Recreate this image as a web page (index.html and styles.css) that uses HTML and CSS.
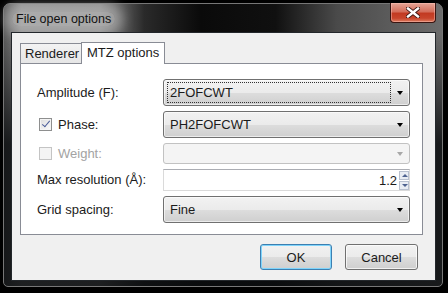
FILE: index.html
```html
<!DOCTYPE html>
<html lang="en">
<head>
    <meta charset="UTF-8">
    <title>File open options</title>
    <link rel="stylesheet" href="styles.css">
</head>
<body>

<div class="window">
    <div class="titlebar">
        <span class="title">File open options</span>
        <div class="close">
            <svg width="14" height="11" viewBox="0 0 14 11">
                <path d="M2 1.5 L12 9.5 M12 1.5 L2 9.5" stroke="#3b1410" stroke-width="4.2" stroke-linecap="square"/>
                <path d="M2 1.5 L12 9.5 M12 1.5 L2 9.5" stroke="#fff" stroke-width="2.4" stroke-linecap="square"/>
            </svg>
        </div>
    </div>

    <div class="client">
        <div class="tabs">
            <div class="tabbar">
                <div class="tab">Renderer</div>
                <div class="tab active">MTZ options</div>
            </div>
            <div class="pane">
                <div class="form">
                    <label class="lbl">Amplitude (F):</label>
                    <div class="combo">
                        <span class="val focus">2FOFCWT</span>
                        <span class="arrow"></span>
                    </div>

                    <label class="lbl"><span class="check on"></span>Phase:</label>
                    <div class="combo">
                        <span class="val">PH2FOFCWT</span>
                        <span class="arrow"></span>
                    </div>

                    <label class="lbl disabled"><span class="check"></span>Weight:</label>
                    <div class="combo off">
                        <span class="val"></span>
                        <span class="arrow"></span>
                    </div>

                    <label class="lbl">Max resolution (Å):</label>
                    <div class="spin">
                        <span class="num">1.2</span>
                        <span class="steps">
                            <span class="step up"></span>
                            <span class="step down"></span>
                        </span>
                    </div>

                    <label class="lbl">Grid spacing:</label>
                    <div class="combo">
                        <span class="val">Fine</span>
                        <span class="arrow"></span>
                    </div>
                </div>
            </div>
        </div>

        <div class="buttons">
            <button class="btn default">OK</button>
            <button class="btn">Cancel</button>
        </div>
    </div>
</div>

</body>
</html>
```

FILE: styles.css
```css
body { margin: 0; background: #000; font-family: "Liberation Sans", Arial, sans-serif; font-size: 13px; color: #1b1b1b; }

.window {
    box-sizing: border-box; width: 440px; height: 284px; margin: 3px 0 0 3px;
    padding: 0 6px 5px 7px; display: flex; flex-direction: column;
    border: 1px solid #777; border-radius: 7px 7px 5px 5px;
    background:
        linear-gradient(to bottom, rgba(0,0,0,0) 30px, rgba(10,12,14,0.85) 140px),
        linear-gradient(to right, #5c5c5c 0%, #8e8e8e 4%, #8a8a8a 22%, #2a2a2a 32%, #0a0a0a 45%, #101010 62%, #4a4a4a 76%, #6c6c6c 100%);
}

.titlebar { height: 28px; display: flex; justify-content: space-between; align-items: flex-start; flex-shrink: 0; }
.title {
    margin: 8px 0 0 1px; padding: 0 4px; font-size: 12.5px; color: #111;
    background: rgba(190,190,190,0.6); border-radius: 8px;
    box-shadow: 0 0 11px 8px rgba(190,190,190,0.55);
}
.close {
    width: 46px; height: 20px; margin: -1px 0 0 0; box-sizing: border-box;
    display: flex; align-items: center; justify-content: center;
    border: 1px solid #3a1511; border-top: none; border-radius: 0 0 4px 4px;
    background: linear-gradient(to bottom, #e7a596 0%, #d46f5c 45%, #c23a22 55%, #c8452c 80%, #dc7c60 100%);
    box-shadow: inset 0 0 0 1px rgba(255,200,190,0.45);
}

.client {
    flex: 1; background: #f0f0f0; border: 1px solid #23272b;
    display: flex; flex-direction: column;
}

.tabs { margin: 9px 12px 0 8px; }
.tabbar { display: flex; align-items: flex-end; height: 21px; }
.tab {
    box-sizing: border-box; width: 62px; height: 20px; padding: 0 0 0 4px;
    display: flex; align-items: center;
    border: 1px solid #898c95; border-bottom: none;
    background: linear-gradient(to bottom, #f3f3f3, #e6e6e6);
}
.tab.active {
    width: 84px; height: 22px; margin: 0 0 -1px -1px; padding: 0 0 3px 5px;
    background: #fff; position: relative; z-index: 1;
}

.pane {
    box-sizing: border-box; height: 172px; background: #fff;
    border: 1px solid #898c95; padding: 15px 14px 0 16px;
}

.form {
    display: grid; grid-template-columns: 126px 247px;
    grid-template-rows: 27px 27px 21px 22px 27px; row-gap: 5px;
}
.lbl { display: flex; align-items: center; gap: 6px; padding-bottom: 1px; }
.lbl.disabled { color: #a3a3a3; }

.check {
    box-sizing: border-box; width: 13px; height: 13px; margin-left: 2px;
    border: 1px solid #8e8f8f; position: relative;
    background: linear-gradient(135deg, #dcdcdc, #fbfbfb);
    box-shadow: inset 0 0 0 1px #f4f4f4;
}
.check.on::after {
    content: ""; position: absolute; left: 3.5px; top: 0.5px; width: 3px; height: 7px;
    border: solid #4a5c98; border-width: 0 1.5px 1.5px 0; transform: rotate(40deg);
}
.lbl.disabled .check { border-color: #c4c4c4; background: #f4f4f4; box-shadow: none; }

.combo {
    box-sizing: border-box; display: flex; align-items: center; padding: 0 6px 0 3px;
    border: 1px solid #707070; border-radius: 3px;
    background: linear-gradient(to bottom, #f2f2f2 0%, #ebebeb 50%, #dddddd 51%, #cfcfcf 100%);
    box-shadow: inset 0 0 0 1px rgba(255,255,255,0.6);
}
.combo .val { flex: 1; padding: 2px 0 2px 2px; margin-right: 6px; border: 1px solid transparent; }
.combo .val.focus { border: 1px dotted #333; }
.arrow {
    width: 0; height: 0; border-left: 3.5px solid transparent; border-right: 3.5px solid transparent;
    border-top: 4px solid #000;
}
.combo.off { border-color: #c2c2c2; background: #f4f4f4; box-shadow: none; }
.combo.off .arrow { border-top-color: #a8a8a8; }

.spin {
    box-sizing: border-box; display: flex; align-items: center; padding: 0 0 0 4px;
    border: 1px solid #dadada; border-top-color: #abadb3; background: #fff;
}
.spin .num { flex: 1; text-align: right; padding-right: 2px; }
.steps { display: flex; flex-direction: column; gap: 1px; width: 10px; }
.step {
    box-sizing: border-box; height: 9px; border: 1px solid #b9c1cf; background: #e9edf3;
    position: relative;
}
.step::after {
    content: ""; position: absolute; left: 1.5px; top: 2px;
    border-left: 3px solid transparent; border-right: 3px solid transparent;
}
.step.up::after { border-bottom: 3px solid #4f6390; }
.step.down::after { border-top: 3px solid #4f6390; }

.buttons { display: flex; justify-content: flex-end; gap: 13px; margin: 9px 17px 0 0; }
.btn {
    box-sizing: border-box; width: 73px; height: 26px; padding: 0;
    font-family: inherit; font-size: 13px; color: #1b1b1b;
    border: 1px solid #707070; border-radius: 3px;
    background: linear-gradient(to bottom, #f2f2f2 0%, #ebebeb 50%, #dddddd 51%, #cfcfcf 100%);
    box-shadow: inset 0 0 0 1px rgba(255,255,255,0.7);
}
.btn.default { width: 72px; border-color: #3c7fb1; box-shadow: inset 0 0 0 1px #7fd4fb; }
```
